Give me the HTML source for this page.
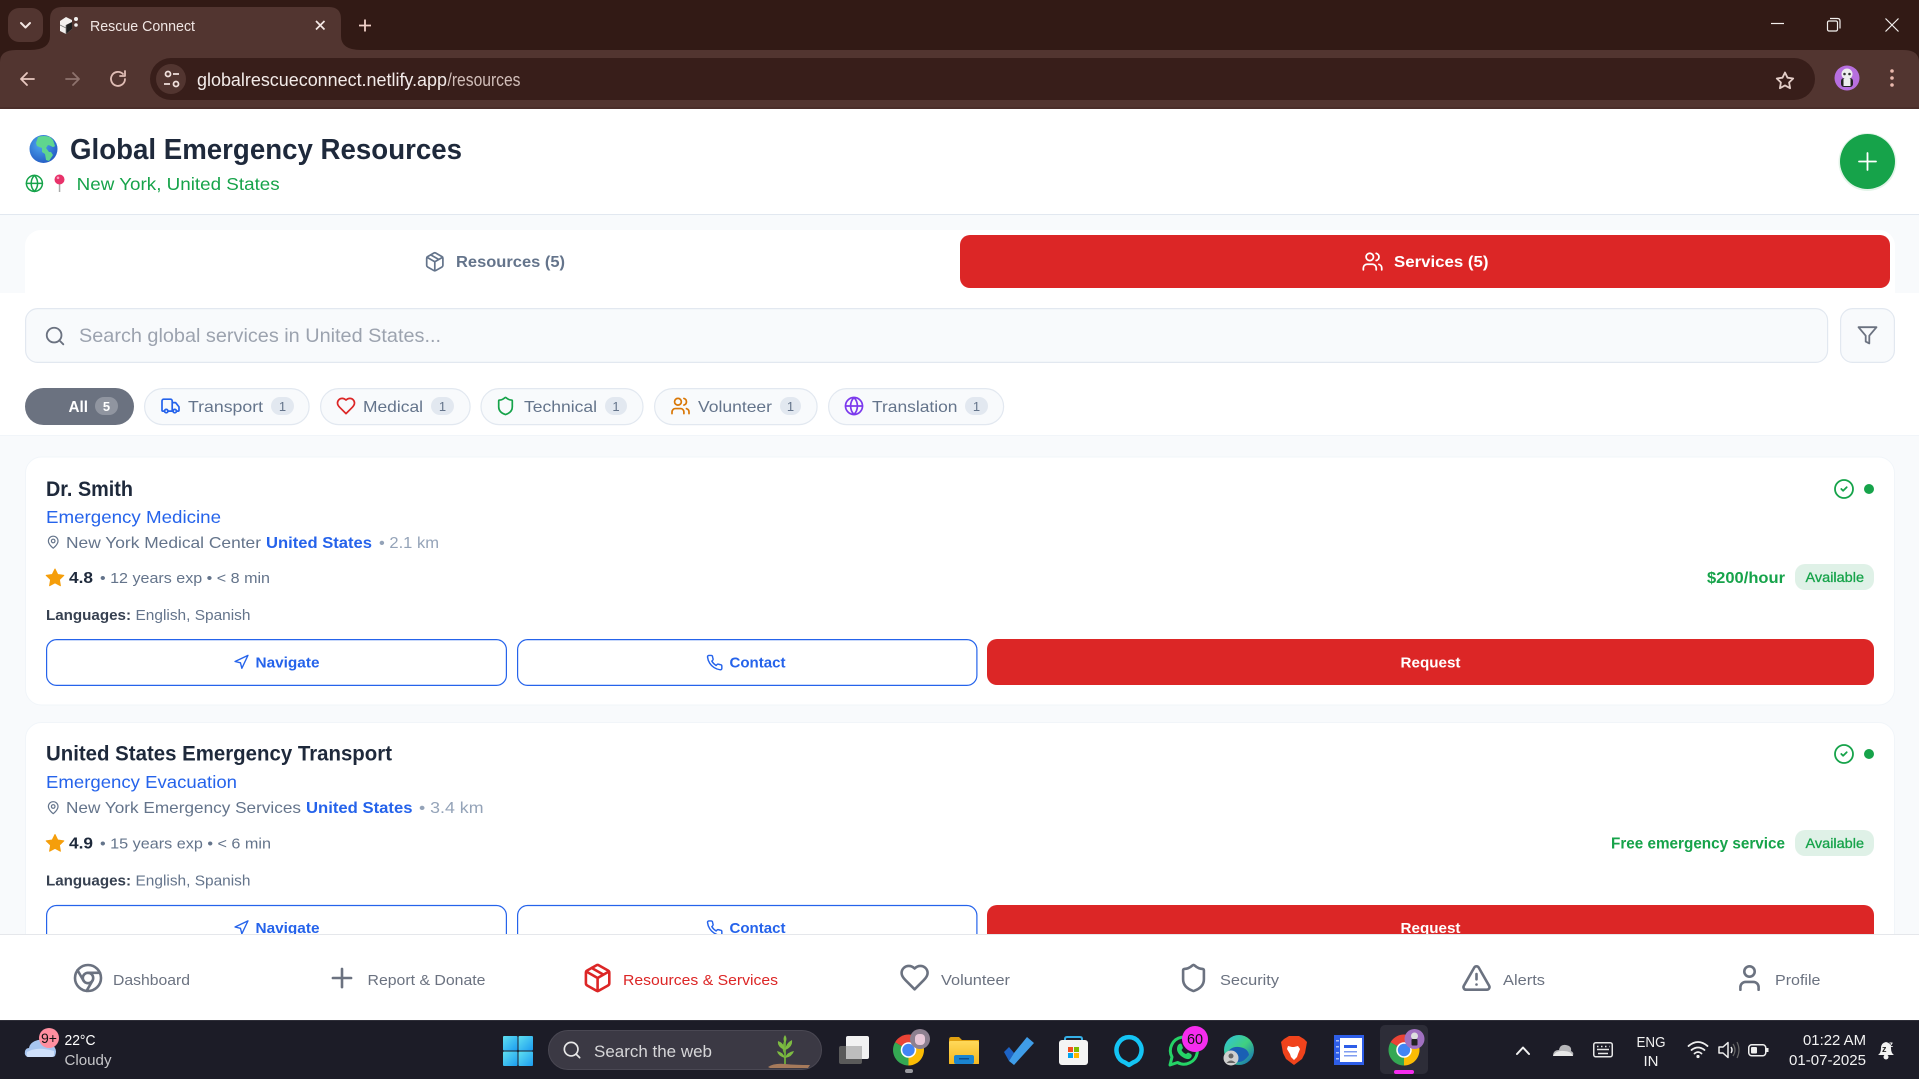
<!DOCTYPE html>
<html lang="en"><head><meta charset="utf-8"><title>Rescue Connect</title>
<style>
html,body{margin:0;padding:0;width:1919px;height:1079px;overflow:hidden;background:#fff}
svg{display:block;font-family:"Liberation Sans",sans-serif}
.i{fill:none;stroke-linecap:round;stroke-linejoin:round}
.b{font-weight:700}
</style></head><body>
<svg xmlns="http://www.w3.org/2000/svg" width="1919" height="1079" viewBox="0 0 1919 1079">
<defs>
<radialGradient id="gb" cx=".4" cy=".35" r=".75"><stop offset="0" stop-color="#4fa8f0"/><stop offset="1" stop-color="#1f55c0"/></radialGradient>
<linearGradient id="win" x1="0" y1="0" x2="1" y2="1"><stop offset="0" stop-color="#5fe0f0"/><stop offset="1" stop-color="#1c9cf0"/></linearGradient>
<linearGradient id="edge" x1="0" y1="0" x2="1" y2="1"><stop offset="0" stop-color="#2fc0e0"/><stop offset=".5" stop-color="#40d080"/><stop offset="1" stop-color="#1060c0"/></linearGradient>
<linearGradient id="fold" x1="0" y1="0" x2="0" y2="1"><stop offset="0" stop-color="#ffd95a"/><stop offset="1" stop-color="#f5b81f"/></linearGradient>
<g id="chrome-l"><circle cx="12" cy="12" r="10"/><circle cx="12" cy="12" r="4"/><path d="M21.17 8H12M3.95 6.06 8.54 14M10.88 21.94 15.46 14"/></g>
<g id="plus"><path d="M5 12h14M12 5v14"/></g>
<g id="package"><path d="M11 21.73a2 2 0 0 0 2 0l7-4A2 2 0 0 0 21 16V8a2 2 0 0 0-1-1.73l-7-4a2 2 0 0 0-2 0l-7 4A2 2 0 0 0 3 8v8a2 2 0 0 0 1 1.73z"/><path d="M12 22V12M3.29 7 12 12l8.71-5M7.5 4.27l9 5.15"/></g>
<g id="heart"><path d="M19 14c1.49-1.46 3-3.21 3-5.5A5.5 5.5 0 0 0 16.5 3c-1.76 0-3 .5-4.5 2-1.5-1.5-2.74-2-4.5-2A5.5 5.5 0 0 0 2 8.5c0 2.3 1.5 4.05 3 5.5l7 7Z"/></g>
<g id="shield"><path d="M20 13c0 5-3.5 7.5-7.66 8.95a1 1 0 0 1-.67-.01C7.5 20.5 4 18 4 13V6a1 1 0 0 1 1-1c2 0 4.5-1.2 6.24-2.72a1.17 1.17 0 0 1 1.52 0C14.51 3.81 17 5 19 5a1 1 0 0 1 1 1z"/></g>
<g id="alert"><path d="m21.73 18-8-14a2 2 0 0 0-3.48 0l-8 14A2 2 0 0 0 4 21h16a2 2 0 0 0 1.73-3"/><path d="M12 9v4M12 17h.01"/></g>
<g id="user"><path d="M19 21v-2a4 4 0 0 0-4-4H9a4 4 0 0 0-4 4v2"/><circle cx="12" cy="7" r="4"/></g>
<g id="users"><path d="M16 21v-2a4 4 0 0 0-4-4H6a4 4 0 0 0-4 4v2"/><circle cx="9" cy="7" r="4"/><path d="M22 21v-2a4 4 0 0 0-3-3.87M16 3.13a4 4 0 0 1 0 7.75"/></g>
<g id="truck"><path d="M14 18V6a2 2 0 0 0-2-2H4a2 2 0 0 0-2 2v11a1 1 0 0 0 1 1h2M15 18H9M19 18h2a1 1 0 0 0 1-1v-3.65a1 1 0 0 0-.22-.624l-3.48-4.35A1 1 0 0 0 17.52 8H14"/><circle cx="17" cy="18" r="2"/><circle cx="7" cy="18" r="2"/></g>
<g id="globe"><circle cx="12" cy="12" r="10"/><path d="M12 2a14.5 14.5 0 0 0 0 20 14.5 14.5 0 0 0 0-20M2 12h20"/></g>
<g id="search"><circle cx="11" cy="11" r="8"/><path d="m21 21-4.3-4.3"/></g>
<g id="filter"><path d="M22 3H2l8 9.46V19l4 2v-8.54z"/></g>
<g id="pin"><path d="M20 10c0 6-8 12-8 12s-8-6-8-12a8 8 0 0 1 16 0Z"/><circle cx="12" cy="10" r="3"/></g>
<g id="nav"><path d="M3 11 22 2l-9 19-2-8z"/></g>
<g id="phone"><path d="M22 16.92v3a2 2 0 0 1-2.18 2 19.79 19.79 0 0 1-8.63-3.07 19.5 19.5 0 0 1-6-6 19.79 19.79 0 0 1-3.07-8.67A2 2 0 0 1 4.11 2h3a2 2 0 0 1 2 1.72 12.84 12.84 0 0 0 .7 2.81 2 2 0 0 1-.45 2.11L8.09 9.91a16 16 0 0 0 6 6l1.27-1.27a2 2 0 0 1 2.11-.45 12.84 12.84 0 0 0 2.81.7A2 2 0 0 1 22 16.92z"/></g>
<g id="check"><circle cx="12" cy="12" r="10"/><path d="m9 12 2 2 4-4"/></g>
<g id="chromelogo"><path fill="#ea4335" d="M0 0L-.866-.5A1 1 0 0 1 .866-.5Z"/><path fill="#fbbc04" d="M0 0L.866-.5A1 1 0 0 1 0 1Z"/><path fill="#34a853" d="M0 0L0 1A1 1 0 0 1-.866-.5Z"/><circle r=".5" fill="#fff"/><circle r=".4" fill="#4285f4"/></g>
</defs>

<!-- Browser chrome -->
<rect width="1919" height="50" fill="#321a15"/>
<rect x="8" y="8" width="35" height="34" rx="11" fill="#523530"/>
<path class="i" d="M21 23l4.500 4.500 4.500-4.500" stroke="#f3e6e2" stroke-width="2"/>
<rect y="50" width="1919" height="59" fill="#523530"/>
<path d="M0 62V50h16Q0 50 0 62ZM1919 62V50h-16q16 0 16 12Z" fill="#321a15"/>
<path d="M30 50Q50 50 50 36V19Q50 7 62 7H329Q341 7 341 19V36Q341 50 361 50Z" fill="#523530"/>
<rect y="107" width="1919" height="2" fill="#4a2e2a"/>
<g fill="#f3f0ee"><path d="M60 21l6-4 6 3v9l-6 5-6-3z"/><circle cx="76" cy="19" r="2"/><circle cx="76" cy="25" r="1.800"/></g>
<path d="M66 25l6-3v7l-6 5z" fill="#1e1e1e"/>
<path d="M66 25v9M60 25l6 3" stroke="#777" stroke-width=".7" fill="none"/>
<text x="90" y="31" font-size="15" fill="#f0e6e3" textLength="105" lengthAdjust="spacingAndGlyphs">Rescue Connect</text>
<path d="M316 21l8.500 8.500m0-8.500l-8.500 8.500" stroke="#f5e9e6" stroke-width="1.700" fill="none"/>
<path d="M365 19.500v12M359 25.500h12" stroke="#f0d0c8" stroke-width="1.800" fill="none"/>
<path class="i" d="M34 79H21M27 73l-6 6 6 6" stroke="#e8c8c0" stroke-width="1.800"/>
<path class="i" d="M66 79h13M73 73l6 6-6 6" stroke="#8e736d" stroke-width="1.800"/>
<path class="i" d="M125 79a7 7 0 1 1-2-5M125 71v5h-5" stroke="#e0bdb5" stroke-width="1.800"/>
<rect x="150" y="58" width="1665" height="42" rx="21" fill="#381e1a"/>
<circle cx="171" cy="79" r="15" fill="#523530"/>
<g fill="none" stroke="#f0e0dc" stroke-width="1.800"><circle cx="168" cy="74" r="2.500"/><path d="M173 74h6M164 84h6"/><circle cx="176" cy="84" r="2.500"/></g>
<text x="197" y="86" font-size="18.500" fill="#f3ebe9" textLength="250" lengthAdjust="spacingAndGlyphs">globalrescueconnect.netlify.app</text>
<text x="447.500" y="86" font-size="18.500" fill="#d2bfba" textLength="73" lengthAdjust="spacingAndGlyphs">/resources</text>
<path d="M1785 72.500l2.500 5.200 5.700.8-4.100 4 1 5.700-5.100-2.800-5.100 2.800 1-5.700-4.100-4 5.700-.8z" fill="none" stroke="#e3cdc7" stroke-width="1.800" stroke-linejoin="round"/>
<circle cx="1847" cy="78" r="12.500" fill="#b76fdf"/>
<rect x="1841" y="78" width="12" height="9" rx="3" fill="#222"/>
<rect x="1843.500" y="79" width="7" height="7" fill="#eee"/>
<circle cx="1847" cy="74" r="5.500" fill="#eee"/><circle cx="1844.500" cy="74" r="1.300" fill="#333"/><circle cx="1849.500" cy="74" r="1.300" fill="#333"/>
<g fill="#e9b9ad"><circle cx="1892" cy="71" r="1.800"/><circle cx="1892" cy="78" r="1.800"/><circle cx="1892" cy="85" r="1.800"/></g>
<path d="M1771 23.500h13" stroke="#f3f0ee" stroke-width="1.200"/>
<g fill="none" stroke="#f3f0ee" stroke-width="1.200"><rect x="1827.500" y="21" width="10" height="10" rx="1.500"/><path d="M1830 18.500h7.500q2.500 0 2.500 2.500v7.500"/></g>
<path d="M1885.500 18.500l13 13m0-13l-13 13" stroke="#f3f0ee" stroke-width="1.200"/>

<!-- Page header -->
<rect y="109" width="1919" height="105" fill="#fff"/>
<rect y="214" width="1919" height="1.200" fill="#e2e8f0"/>
<circle cx="43.500" cy="149" r="14" fill="url(#gb)"/>
<path d="M38 137q6-2 12 0l3 3 2 6q-2 2-4 0l-3-1-2 3 3 4 2 0 2 3-4 6-3-1-1-6-3-2 0-4-5-2-1-3z" fill="#5fd68f"/>
<text x="70" y="159" font-size="28.800" class="b" fill="#1e293b" textLength="392" lengthAdjust="spacingAndGlyphs">Global Emergency Resources</text>
<use href="#globe" class="i" stroke="#16a34a" stroke-width="1.900" transform="translate(24.800 173.800) scale(.8)"/>
<rect x="58.800" y="183" width="1.500" height="9" fill="#aaa"/>
<circle cx="59.500" cy="179.500" r="5" fill="#e8326a"/><circle cx="58" cy="177.800" r="1.300" fill="#f8a0c0"/>
<text x="76.700" y="190" font-size="17.600" fill="#16a34a" textLength="203" lengthAdjust="spacingAndGlyphs">New York, United States</text>
<circle cx="1867.500" cy="162" r="29" fill="#16a34a" fill-opacity=".12"/>
<circle cx="1867.500" cy="161.500" r="27.500" fill="#16a34a"/>
<path d="M1867.500 153v17M1859 161.500h17" stroke="#fff" stroke-width="1.800" stroke-linecap="round"/>

<!-- Tabs -->
<rect y="215.200" width="1919" height="77.800" fill="#f8fafc"/>
<path d="M25 293V246a16 16 0 0 1 16-16H1879a16 16 0 0 1 16 16V293Z" fill="#fff"/>
<use href="#package" class="i" stroke="#64748b" stroke-width="1.900" transform="translate(424 251) scale(.9)"/>
<text x="456" y="267" font-size="16" class="b" fill="#64748b" textLength="109" lengthAdjust="spacingAndGlyphs">Resources (5)</text>
<rect x="960" y="235" width="930" height="53" rx="10" fill="#dc2626"/>
<use href="#users" class="i" stroke="#fff" stroke-width="1.900" transform="translate(1361.500 250.500) scale(.92)"/>
<text x="1394" y="267" font-size="16" class="b" fill="#fff" textLength="94.500" lengthAdjust="spacingAndGlyphs">Services (5)</text>

<!-- Search -->
<rect y="293" width="1919" height="142" fill="#fff"/>
<rect x="25.600" y="308.600" width="1802" height="53.800" rx="12" fill="#f8fafc" stroke="#e2e8f0" stroke-width="1.200"/>
<use href="#search" class="i" stroke="#6b7280" stroke-width="2" transform="translate(44 325) scale(.92)"/>
<text x="79" y="342" font-size="19.200" fill="#9ca3af" textLength="362" lengthAdjust="spacingAndGlyphs">Search global services in United States...</text>
<rect x="1840.600" y="308.600" width="53.800" height="53.800" rx="12" fill="#f8fafc" stroke="#e2e8f0" stroke-width="1.200"/>
<use href="#filter" class="i" stroke="#6b7280" stroke-width="2" transform="translate(1856.700 324.500) scale(.9)"/>

<!-- Pills -->
<rect x="25" y="388" width="109" height="37" rx="18.500" fill="#6b7280"/>
<text x="68.500" y="412" font-size="16" class="b" fill="#fff" textLength="19.500" lengthAdjust="spacingAndGlyphs">All</text>
<rect x="95" y="397" width="23" height="18" rx="9" fill="#fff" fill-opacity=".25"/>
<text x="106.500" y="411" font-size="13" class="b" fill="#fff" text-anchor="middle">5</text>
<g fill="#f8fafc" stroke="#e2e8f0" stroke-width="1.200">
<rect x="144.600" y="388.600" width="164.500" height="36" rx="18"/>
<rect x="320.600" y="388.600" width="149.500" height="36" rx="18"/>
<rect x="481" y="388.600" width="162" height="36" rx="18"/>
<rect x="654.600" y="388.600" width="162.500" height="36" rx="18"/>
<rect x="828.600" y="388.600" width="175" height="36" rx="18"/>
</g>
<g fill="#e2e8f0">
<rect x="271" y="397" width="23" height="18" rx="9"/>
<rect x="431" y="397" width="23" height="18" rx="9"/>
<rect x="605" y="397" width="22" height="18" rx="9"/>
<rect x="780" y="397" width="21" height="18" rx="9"/>
<rect x="965" y="397" width="23" height="18" rx="9"/>
</g>
<g font-size="16" fill="#64748b">
<text x="188" y="412" textLength="75" lengthAdjust="spacingAndGlyphs">Transport</text>
<text x="363" y="412" textLength="60" lengthAdjust="spacingAndGlyphs">Medical</text>
<text x="524" y="412" textLength="73" lengthAdjust="spacingAndGlyphs">Technical</text>
<text x="698" y="412" textLength="74" lengthAdjust="spacingAndGlyphs">Volunteer</text>
<text x="872" y="412" textLength="85.500" lengthAdjust="spacingAndGlyphs">Translation</text>
</g>
<g font-size="13" fill="#64748b" text-anchor="middle">
<text x="282.500" y="411">1</text><text x="442.500" y="411">1</text><text x="616" y="411">1</text><text x="790.500" y="411">1</text><text x="976.500" y="411">1</text>
</g>
<use href="#truck" class="i" stroke="#2563eb" stroke-width="2" transform="translate(160.300 395.800) scale(.85)"/>
<use href="#heart" class="i" stroke="#dc2626" stroke-width="2" transform="translate(335.800 395.800) scale(.85)"/>
<use href="#shield" class="i" stroke="#16a34a" stroke-width="2" transform="translate(495.300 395.800) scale(.85)"/>
<use href="#users" class="i" stroke="#d97706" stroke-width="2" transform="translate(670.300 395.800) scale(.85)"/>
<use href="#globe" class="i" stroke="#7c3aed" stroke-width="2" transform="translate(843.800 395.800) scale(.85)"/>

<!-- Content -->
<rect y="435" width="1919" height="500" fill="#f8fafc"/>
<rect y="435" width="1919" height="1" fill="#f1f5f9"/>

<!-- Card 1 -->
<rect x="25.500" y="457" width="1869" height="248" rx="16" fill="#fff" stroke="#f1f5f9"/>
<text x="46" y="496" font-size="20.800" class="b" fill="#1e293b" textLength="87" lengthAdjust="spacingAndGlyphs">Dr. Smith</text>
<text x="46" y="523" font-size="17.600" fill="#2563eb" textLength="175" lengthAdjust="spacingAndGlyphs">Emergency Medicine</text>
<use href="#pin" class="i" stroke="#64748b" stroke-width="2" transform="translate(46 535) scale(.6)"/>
<text x="66" y="548" font-size="16" fill="#64748b" textLength="195" lengthAdjust="spacingAndGlyphs">New York Medical Center</text>
<text x="266" y="548" font-size="16" class="b" fill="#2563eb" textLength="106" lengthAdjust="spacingAndGlyphs">United States</text>
<text x="379" y="548" font-size="16" fill="#94a3b8" textLength="60" lengthAdjust="spacingAndGlyphs">• 2.1 km</text>
<path d="M55 569l2.700 5.500 6.100.9-4.400 4.300 1 6-5.400-2.900-5.400 2.900 1-6-4.400-4.300 6.100-.9z" fill="#f59e0b" stroke="#f59e0b" stroke-linejoin="round"/>
<text x="69" y="583" font-size="16" class="b" fill="#1e293b" textLength="24" lengthAdjust="spacingAndGlyphs">4.8</text>
<text x="100" y="583" font-size="15" fill="#64748b" textLength="170" lengthAdjust="spacingAndGlyphs">• 12 years exp • &lt; 8 min</text>
<text x="46" y="620" font-size="15" class="b" fill="#374151" textLength="85" lengthAdjust="spacingAndGlyphs">Languages:</text>
<text x="135.500" y="620" font-size="15" fill="#64748b" textLength="115" lengthAdjust="spacingAndGlyphs">English, Spanish</text>
<rect x="46.600" y="639.600" width="459.800" height="45.800" rx="10" fill="#fff" stroke="#2563eb" stroke-width="1.200"/>
<use href="#nav" class="i" stroke="#2563eb" stroke-width="2" transform="translate(233 654) scale(.68)"/>
<text x="255.500" y="667.500" font-size="15" class="b" fill="#2563eb" textLength="64" lengthAdjust="spacingAndGlyphs">Navigate</text>
<rect x="517.600" y="639.600" width="459.300" height="45.800" rx="10" fill="#fff" stroke="#2563eb" stroke-width="1.200"/>
<use href="#phone" class="i" stroke="#2563eb" stroke-width="2" transform="translate(706 654) scale(.72)"/>
<text x="729.500" y="667.500" font-size="15" class="b" fill="#2563eb" textLength="56" lengthAdjust="spacingAndGlyphs">Contact</text>
<rect x="987" y="639" width="887" height="46" rx="10" fill="#dc2626"/>
<text x="1400.500" y="667.500" font-size="15" class="b" fill="#fff" textLength="60" lengthAdjust="spacingAndGlyphs">Request</text>
<use href="#check" class="i" stroke="#16a34a" stroke-width="2" transform="translate(1833.200 478.200) scale(.9)"/>
<circle cx="1869" cy="489" r="5" fill="#16a34a"/>
<text x="1707" y="583" font-size="16" class="b" fill="#16a34a" textLength="78" lengthAdjust="spacingAndGlyphs">$200/hour</text>
<rect x="1795" y="564" width="79" height="26" rx="10" fill="#dff1e7"/>
<text x="1805.500" y="582" font-size="14" fill="#16a34a" textLength="58.500" lengthAdjust="spacingAndGlyphs" stroke="#16a34a" stroke-width=".3">Available</text>

<!-- Card 2 -->
<g transform="translate(0 265.500)">
<rect x="25.500" y="457" width="1869" height="248" rx="16" fill="#fff" stroke="#f1f5f9"/>
<text x="46" y="495" font-size="20.800" class="b" fill="#1e293b" textLength="346" lengthAdjust="spacingAndGlyphs">United States Emergency Transport</text>
<text x="46" y="522.500" font-size="17.600" fill="#2563eb" textLength="191" lengthAdjust="spacingAndGlyphs">Emergency Evacuation</text>
<use href="#pin" class="i" stroke="#64748b" stroke-width="2" transform="translate(46 535) scale(.6)"/>
<text x="66" y="547.500" font-size="16" fill="#64748b" textLength="235" lengthAdjust="spacingAndGlyphs">New York Emergency Services</text>
<text x="306" y="547.500" font-size="16" class="b" fill="#2563eb" textLength="106.500" lengthAdjust="spacingAndGlyphs">United States</text>
<text x="419" y="547.500" font-size="16" fill="#94a3b8" textLength="64.500" lengthAdjust="spacingAndGlyphs">• 3.4 km</text>
<path d="M55 569l2.700 5.500 6.100.9-4.400 4.300 1 6-5.400-2.900-5.400 2.900 1-6-4.400-4.300 6.100-.9z" fill="#f59e0b" stroke="#f59e0b" stroke-linejoin="round"/>
<text x="69" y="583" font-size="16" class="b" fill="#1e293b" textLength="24" lengthAdjust="spacingAndGlyphs">4.9</text>
<text x="100" y="583" font-size="15" fill="#64748b" textLength="171" lengthAdjust="spacingAndGlyphs">• 15 years exp • &lt; 6 min</text>
<text x="46" y="620" font-size="15" class="b" fill="#374151" textLength="85" lengthAdjust="spacingAndGlyphs">Languages:</text>
<text x="135.500" y="620" font-size="15" fill="#64748b" textLength="115" lengthAdjust="spacingAndGlyphs">English, Spanish</text>
<rect x="46.600" y="640" width="459.800" height="45.800" rx="10" fill="#fff" stroke="#2563eb" stroke-width="1.200"/>
<use href="#nav" class="i" stroke="#2563eb" stroke-width="2" transform="translate(233 654) scale(.68)"/>
<text x="255.500" y="667.500" font-size="15" class="b" fill="#2563eb" textLength="64" lengthAdjust="spacingAndGlyphs">Navigate</text>
<rect x="517.600" y="640" width="459.300" height="45.800" rx="10" fill="#fff" stroke="#2563eb" stroke-width="1.200"/>
<use href="#phone" class="i" stroke="#2563eb" stroke-width="2" transform="translate(706 654) scale(.72)"/>
<text x="729.500" y="667.500" font-size="15" class="b" fill="#2563eb" textLength="56" lengthAdjust="spacingAndGlyphs">Contact</text>
<rect x="987" y="639.500" width="887" height="46" rx="10" fill="#dc2626"/>
<text x="1400.500" y="667.500" font-size="15" class="b" fill="#fff" textLength="60" lengthAdjust="spacingAndGlyphs">Request</text>
<use href="#check" class="i" stroke="#16a34a" stroke-width="2" transform="translate(1833.200 477.700) scale(.9)"/>
<circle cx="1869" cy="488.500" r="5" fill="#16a34a"/>
<text x="1611" y="583" font-size="16" class="b" fill="#16a34a" textLength="174" lengthAdjust="spacingAndGlyphs">Free emergency service</text>
<rect x="1795" y="564.500" width="79" height="26" rx="10" fill="#dff1e7"/>
<text x="1805.500" y="582.500" font-size="14" fill="#16a34a" textLength="58.500" lengthAdjust="spacingAndGlyphs" stroke="#16a34a" stroke-width=".3">Available</text>
</g>

<!-- Bottom nav -->
<rect y="934" width="1919" height="86" fill="#fff"/>
<rect y="934" width="1919" height="1" fill="#e5e7eb"/>
<g class="i" stroke="#6b7280" stroke-width="2">
<use href="#chrome-l" transform="translate(72.400 962.400) scale(1.300)"/>
<use href="#plus" transform="translate(326.400 962.400) scale(1.300)"/>
<use href="#heart" transform="translate(899 962) scale(1.300)"/>
<use href="#shield" transform="translate(1177.900 962.400) scale(1.300)"/>
<use href="#alert" transform="translate(1460.900 962.400) scale(1.300)"/>
<use href="#user" transform="translate(1733.900 962.400) scale(1.300)"/>
</g>
<use href="#package" class="i" stroke="#dc2626" stroke-width="2" transform="translate(582 962.400) scale(1.300)"/>
<g font-size="15" fill="#6b7280">
<text x="113" y="985" textLength="77" lengthAdjust="spacingAndGlyphs">Dashboard</text>
<text x="367.500" y="985" textLength="118" lengthAdjust="spacingAndGlyphs">Report &amp; Donate</text>
<text x="941" y="985" textLength="69" lengthAdjust="spacingAndGlyphs">Volunteer</text>
<text x="1220" y="985" textLength="59" lengthAdjust="spacingAndGlyphs">Security</text>
<text x="1503" y="985" textLength="42" lengthAdjust="spacingAndGlyphs">Alerts</text>
<text x="1775" y="985" textLength="45.500" lengthAdjust="spacingAndGlyphs">Profile</text>
<text x="623" y="985" fill="#dc2626" textLength="155" lengthAdjust="spacingAndGlyphs">Resources &amp; Services</text>
</g>

<!-- Taskbar -->
<rect y="1020" width="1919" height="59" fill="#1c1c27"/>
<rect y="1020" width="1919" height="1" fill="#2e2e38"/>
<path d="M28 1057q-4-1-3-6 1-3 4-3 1-6 9-8 7-1 10 4 5 0 7 4 2 3 0 8-1 1-3 1z" fill="#a8c6f0"/>
<path d="M27 1052q10-6 27-1v4q0 2-3 2H28q-2 0-1-5z" fill="#cfe0fa"/>
<circle cx="49" cy="1038" r="10" fill="#ff8fa0"/>
<text x="49" y="1043" font-size="14" fill="#111" text-anchor="middle" textLength="16" lengthAdjust="spacingAndGlyphs">9+</text>
<text x="64.500" y="1045" font-size="15" fill="#fff" textLength="31" lengthAdjust="spacingAndGlyphs">22°C</text>
<text x="64.500" y="1065" font-size="15" fill="#c6c6c9" textLength="47" lengthAdjust="spacingAndGlyphs">Cloudy</text>
<g fill="url(#win)"><rect x="503" y="1036" width="14.500" height="14.500" rx="1"/><rect x="518.500" y="1036" width="14.500" height="14.500" rx="1"/><rect x="503" y="1051.500" width="14.500" height="14.500" rx="1"/><rect x="518.500" y="1051.500" width="14.500" height="14.500" rx="1"/></g>
<rect x="548.500" y="1030.500" width="273" height="39" rx="19.500" fill="#3b3944" stroke="#4a4853"/>
<use href="#search" class="i" stroke="#e8e8e8" stroke-width="2" transform="translate(561.800 1039.800) scale(.85)"/>
<text x="594" y="1057" font-size="17" fill="#d6d6d8" textLength="118" lengthAdjust="spacingAndGlyphs">Search the web</text>
<path d="M768 1067q6-4 17-3t25 1l-2 3h-38z" fill="#a67a5b"/>
<path d="M785 1041q-3 8 0 12M785 1064v-23" stroke="#6fae3a" stroke-width="1.800" fill="none"/>
<path d="M785 1050q-8-3-7-9 6 2 7 9zM785 1050q8-3 7-10-6 3-7 10zM785 1058q-7-2-8-7 6 1 8 7zM785 1058q7-1 9-7-7 1-9 7zM785 1043q-3-4 0-8 3 4 0 8z" fill="#7dbb42"/>

<rect x="839" y="1046" width="23" height="18" rx="2" fill="#5a5a5a"/>
<rect x="846" y="1036" width="23" height="23" rx="2" fill="#f2f2f2"/>
<rect x="846" y="1046" width="16" height="13" fill="#bdbdbd"/>
<use href="#chromelogo" transform="translate(908.500 1050) scale(15.500)"/>
<circle cx="920" cy="1039" r="10" fill="#8d8090"/><rect x="915" y="1034" width="10" height="11" rx="4" fill="#e8c8d8"/>
<rect x="905" y="1069" width="8" height="4" rx="2" fill="#9a9aa0"/>

<path d="M949 1040q0-3 2-3h8l3 3h17v24h-30z" fill="#e0a010"/>
<rect x="949" y="1041" width="30" height="23" rx="1.500" fill="url(#fold)"/>
<rect x="954" y="1055" width="20" height="9" rx="2" fill="#1b85d0"/>
<rect x="959" y="1058" width="10" height="1.500" fill="#0c4f90"/>

<path d="M1004 1052l5-5 5 6-5 8z" fill="#1d62c4"/>
<path d="M1009 1061l5-8 13-16 7 6-20 22z" fill="#3f9de8"/>

<path d="M1065 1043v-4q0-2 2-2h13q2 0 2 2v4" fill="none" stroke="#35b0e8" stroke-width="2"/>
<rect x="1059" y="1040" width="29" height="25" rx="3" fill="#f4f4f4"/>
<g><rect x="1068" y="1047" width="5" height="5" fill="#f25022"/><rect x="1074" y="1047" width="5" height="5" fill="#7fba00"/><rect x="1068" y="1053" width="5" height="5" fill="#00a4ef"/><rect x="1074" y="1053" width="5" height="5" fill="#ffb900"/></g>

<path d="M1125 1062.500a12.500 13 0 1 1 8 0l-4 2.500z" fill="none" stroke="#14c4f4" stroke-width="4.500" stroke-linejoin="round"/>

<path d="M1170 1065l2-8a13.500 13.500 0 1 1 5.500 5.500z" fill="none" stroke="#25d366" stroke-width="3" stroke-linejoin="round"/>
<path d="M1178 1045q3-3 4 0l1 3-1.500 2q1.500 3 4.500 4l2-1.500 3 1.500q2 2-1 4.500-3 2-9-2.500-6-5-3-11z" fill="#25d366"/>
<circle cx="1195" cy="1039" r="13" fill="#f52cee"/>
<text x="1195" y="1044" font-size="15" fill="#111" text-anchor="middle" textLength="16" lengthAdjust="spacingAndGlyphs">60</text>

<circle cx="1239" cy="1050" r="15" fill="url(#edge)"/>
<path d="M1226 1055q4-9 13-8t10 8q-7 10-15 6-6-2-8-6z" fill="#1a5fb4"/>
<circle cx="1231" cy="1058" r="7.500" fill="#cfcfcf"/><circle cx="1231" cy="1056" r="2.500" fill="#666"/><path d="M1226.500 1063q4.500-5 9 0z" fill="#666"/>

<path d="M1284 1039l5-3h10l5 3 3 3-2 11-3 6-8 6-8-6-3-6-2-11z" fill="#f0431c"/>
<path d="M1288 1046l4 1 2 0 4-1 2 3-2 5-1 3-3 3-3-3-1-3-3-5z" fill="#fff"/>

<rect x="1334" y="1035" width="30" height="30" fill="#2e5ee8"/>
<rect x="1340" y="1038" width="22" height="24" fill="#fff"/>
<rect x="1344" y="1045" width="13" height="3" fill="#2e5ee8"/><rect x="1344" y="1051" width="13" height="1.500" fill="#7f9cf0"/><rect x="1344" y="1055" width="13" height="1.500" fill="#7f9cf0"/>
<g fill="#a9bdf5"><rect x="1336" y="1040" width="3" height="1.500"/><rect x="1336" y="1046" width="3" height="1.500"/><rect x="1336" y="1052" width="3" height="1.500"/><rect x="1336" y="1058" width="3" height="1.500"/></g>

<rect x="1380" y="1025" width="48" height="49" rx="5" fill="#2d2d38"/>
<use href="#chromelogo" transform="translate(1404 1050) scale(15.500)"/>
<circle cx="1414.500" cy="1039" r="10" fill="#a070c0"/><circle cx="1414.500" cy="1036" r="3.500" fill="#ddd"/><rect x="1411.500" y="1039" width="6" height="6.500" rx="1" fill="#222"/>
<rect x="1394" y="1070" width="20" height="4" rx="2" fill="#f52cee"/>

<path class="i" d="M1517 1054l6-6.500 6 6.500" stroke="#f2f2f2" stroke-width="2"/>
<path d="M1553 1056q0-6 6-6 1-6 7-5t5 6q3 1 2 5z" fill="#b5b5b8"/><path d="M1553 1056q3-6 11-5 7 0 9 5z" fill="#e8e8e8"/>
<g fill="none" stroke="#e6e6e6" stroke-width="1.500"><rect x="1593.750" y="1042.750" width="18.500" height="14" rx="2"/><path d="M1597 1046.500h1.500M1601 1046.500h1.500M1605 1046.500h1.500M1609 1046.500h.5M1597 1049.500h12M1598 1053.500h10"/></g>
<text x="1651" y="1047" font-size="15" fill="#f2f2f2" text-anchor="middle" textLength="29" lengthAdjust="spacingAndGlyphs">ENG</text>
<text x="1651" y="1066" font-size="15" fill="#f2f2f2" text-anchor="middle" textLength="15" lengthAdjust="spacingAndGlyphs">IN</text>
<g fill="none" stroke="#eee" stroke-width="1.800" stroke-linecap="round"><path d="M1688.500 1046q9.500-8 19 0M1691.500 1050q6.500-5 13 0M1694.500 1053.500q3.500-3 7 0"/></g>
<circle cx="1698" cy="1056.500" r="1.600" fill="#eee"/>
<g fill="none" stroke="#eee" stroke-width="1.500" stroke-linejoin="round"><path d="M1719 1047h4l5-4.500v15l-5-4.500h-4z"/><path d="M1731 1047q2 3 0 6"/></g>
<path d="M1733 1044q4 6 0 12M1737 1042q4 8 0 16" fill="none" stroke="#666" stroke-width="1.200"/>
<rect x="1748.750" y="1044.750" width="17" height="11" rx="3" fill="none" stroke="#eee" stroke-width="1.500"/><rect x="1751" y="1047" width="6" height="6.500" rx="1" fill="#eee"/><rect x="1766.500" y="1048" width="2" height="4" fill="#eee"/>
<text x="1803" y="1045" font-size="15" fill="#f2f2f2" textLength="63" lengthAdjust="spacingAndGlyphs">01:22 AM</text>
<text x="1789" y="1065" font-size="15" fill="#f2f2f2" textLength="77" lengthAdjust="spacingAndGlyphs">01-07-2025</text>
<path d="M1878 1055q3-2 3-7t5-6q5 1 5 6t3 7z" fill="#f2f2f2"/><circle cx="1886" cy="1057" r="2.500" fill="#f2f2f2"/>
<text x="1882" y="1052" font-size="9" class="b" fill="#222">z</text><text x="1889" y="1047" font-size="8" class="b" fill="#f2f2f2">z</text>
</svg>
</body></html>
